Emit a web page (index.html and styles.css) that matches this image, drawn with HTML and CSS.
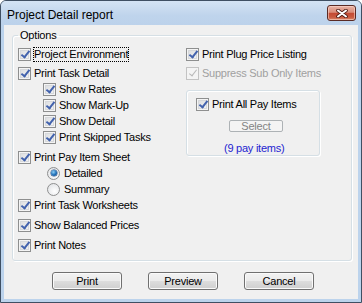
FILE: index.html
```html
<!DOCTYPE html>
<html>
<head>
<meta charset="utf-8">
<link rel="stylesheet" href="styles.css">
</head>
<body>
<div class="window">
  <div class="titlebar">
    <span class="title">Project Detail report</span>
    <span class="close">
      <svg width="12" height="9" viewBox="0 0 12 9">
        <path d="M2 1.5 L10 7.5 M10 1.5 L2 7.5" stroke="#4a1810" stroke-width="3.6" stroke-linecap="round"/>
        <path d="M2 1.5 L10 7.5 M10 1.5 L2 7.5" stroke="#ffffff" stroke-width="2" stroke-linecap="round"/>
      </svg>
    </span>
  </div>
  <div class="client">
    <fieldset class="options">
      <legend>Options</legend>
      <div class="cols">
        <div class="col">
          <div class="grp first">
            <div class="row"><span class="cb on"></span><span class="txt focus">Project Environment</span></div>
          </div>
          <div class="grp">
            <div class="row"><span class="cb on"></span><span class="txt">Print Task Detail</span></div>
            <div class="row sub"><span class="cb on"></span><span class="txt">Show Rates</span></div>
            <div class="row sub"><span class="cb on"></span><span class="txt">Show Mark-Up</span></div>
            <div class="row sub"><span class="cb on"></span><span class="txt">Show Detail</span></div>
            <div class="row sub"><span class="cb on"></span><span class="txt">Print Skipped Tasks</span></div>
          </div>
          <div class="grp">
            <div class="row"><span class="cb on"></span><span class="txt">Print Pay Item Sheet</span></div>
            <div class="row rsub"><span class="rb on"></span><span class="txt">Detailed</span></div>
            <div class="row rsub"><span class="rb"></span><span class="txt">Summary</span></div>
            <div class="row"><span class="cb on"></span><span class="txt">Print Task Worksheets</span></div>
          </div>
          <div class="grp">
            <div class="row"><span class="cb on"></span><span class="txt">Show Balanced Prices</span></div>
          </div>
          <div class="grp">
            <div class="row"><span class="cb on"></span><span class="txt">Print Notes</span></div>
          </div>
        </div>
        <div class="col">
          <div class="grp first">
            <div class="row"><span class="cb on"></span><span class="txt">Print Plug Price Listing</span></div>
          </div>
          <div class="grp">
            <div class="row disabled"><span class="cb on dis"></span><span class="txt">Suppress Sub Only Items</span></div>
          </div>
          <div class="paybox">
            <div class="row"><span class="cb on"></span><span class="txt">Print All Pay Items</span></div>
            <div class="selectbtn">Select</div>
            <div class="count">(9 pay items)</div>
          </div>
        </div>
      </div>
    </fieldset>
    <div class="buttons">
      <div class="btn">Print</div>
      <div class="btn">Preview</div>
      <div class="btn">Cancel</div>
    </div>
  </div>
</div>
</body>
</html>
```

FILE: styles.css
```css
html, body {
  margin: 0;
  padding: 0;
  background: #ffffff;
}

.window {
  width: 362px;
  height: 303px;
  box-sizing: border-box;
  border: 1px solid #3f4f63;
  border-radius: 6px 6px 0 0;
  background: #bcd3ec;
  display: flex;
  flex-direction: column;
  font-family: "Liberation Sans", Arial, sans-serif;
  color: #000;
}

.titlebar {
  height: 24px;
  flex: none;
  display: flex;
  align-items: flex-start;
  justify-content: space-between;
  padding: 0 5px 0 6px;
  background: linear-gradient(#d4e3f4, #bfd4ec 60%, #bcd2eb);
  border-radius: 5px 5px 0 0;
}

.title {
  font-size: 12px;
  line-height: 14px;
  margin-top: 7px;
  color: #000;
}

.close {
  width: 29px;
  height: 16px;
  margin-top: 4px;
  box-sizing: border-box;
  border: 1px solid #5a2a24;
  border-radius: 3px;
  background: linear-gradient(#e9b3a6 0%, #d98c78 45%, #c44a33 52%, #c95a3f 80%, #d98a6c 100%);
  box-shadow: inset 0 0 0 1px rgba(255, 220, 210, 0.55);
  display: flex;
  align-items: center;
  justify-content: center;
}

.close svg {
  display: block;
}

.client {
  flex: 1;
  margin: 0 3px 3px 3px;
  background: #f0f0f0;
  padding: 4px 6px 0 8px;
  display: flex;
  flex-direction: column;
}

.options {
  margin: 0;
  padding: 5px 5px 7px 5px;
  border: 1px solid #d5dfe5;
  border-radius: 3px;
  box-shadow: inset 1px 1px 0 #ffffff, 1px 1px 0 #ffffff;
  min-width: 0;
}

.options legend {
  padding: 0 2px;
  font-size: 11px;
  line-height: 12px;
  letter-spacing: -0.2px;
}

.cols {
  display: grid;
  grid-template-columns: 168px 1fr;
}

.col {
  display: flex;
  flex-direction: column;
}

.grp {
  display: flex;
  flex-direction: column;
  margin-top: 4px;
}

.grp.first {
  margin-top: 0;
}

.col .grp.first + .grp {
  margin-top: 3px;
}

.row {
  height: 16px;
  display: flex;
  align-items: center;
  font-size: 11px;
  letter-spacing: -0.25px;
  white-space: nowrap;
}

.row.sub {
  padding-left: 25px;
}

.row.rsub {
  padding-left: 29px;
}

.txt {
  margin-left: 2px;
  border: 1px dotted transparent;
  line-height: 13px;
}

.rsub .txt {
  margin-left: 3px;
}

.txt.focus {
  border-color: #000;
}

.cb {
  flex: none;
  width: 13px;
  height: 13px;
  box-sizing: border-box;
  border: 1px solid #8e8f8f;
  background: linear-gradient(135deg, #d8dadd, #f6f6f6);
  box-shadow: inset 0 0 0 1px #f4f4f4, inset 0 0 0 2px #d6d8db;
  position: relative;
}

.cb.on::after {
  content: "";
  position: absolute;
  left: 3.5px;
  top: 0.5px;
  width: 3px;
  height: 7px;
  border: solid #4262ad;
  border-width: 0 2px 2px 0;
  transform: rotate(38deg);
}

.cb.dis {
  border-color: #c3c3c3;
  background: #f4f4f4;
  box-shadow: none;
}

.cb.dis::after {
  border-color: #b8b8b8;
  border-width: 0 1.5px 1.5px 0;
}

.row.disabled {
  color: #a0a0a0;
}

.rb {
  flex: none;
  width: 13px;
  height: 13px;
  box-sizing: border-box;
  border-radius: 50%;
  border: 1px solid #8e8f8f;
  background: radial-gradient(circle at 60% 65%, #ffffff, #dcdee1);
  position: relative;
}

.rb.on::after {
  content: "";
  position: absolute;
  left: 2.5px;
  top: 2.5px;
  width: 6px;
  height: 6px;
  border-radius: 50%;
  background: radial-gradient(circle at 40% 35%, #8fd0f5, #1d6cb5 55%, #124a8a);
  box-shadow: 0 0 0 0.5px #2a4b7c;
}

.paybox {
  margin-top: 9px;
  width: 134px;
  height: 66px;
  box-sizing: border-box;
  border: 1px solid #d5dfe5;
  border-radius: 3px;
  box-shadow: inset 1px 1px 0 #ffffff, 1px 1px 0 #ffffff;
  padding: 5px 0 0 9px;
  display: flex;
  flex-direction: column;
  align-items: flex-start;
}

.selectbtn {
  margin: 8px 0 0 33px;
  width: 54px;
  height: 12px;
  box-sizing: border-box;
  border: 1px solid #adb2b5;
  border-radius: 2px;
  background: #f4f4f4;
  color: #838383;
  font-size: 11px;
  line-height: 10px;
  text-align: center;
  letter-spacing: -0.2px;
}

.count {
  margin: 10px 0 0 28px;
  font-size: 11px;
  line-height: 12px;
  color: #2424d0;
  letter-spacing: -0.25px;
}

.buttons {
  display: flex;
  justify-content: flex-start;
  gap: 26px;
  padding-left: 40px;
  margin-top: 11px;
}

.btn {
  width: 70px;
  height: 18px;
  box-sizing: border-box;
  border: 1px solid #707070;
  border-radius: 3px;
  background: linear-gradient(#f2f2f2 0%, #ebebeb 48%, #dddddd 52%, #cfcfcf 100%);
  box-shadow: inset 0 0 0 1px #fafafa;
  font-size: 11px;
  line-height: 16px;
  text-align: center;
  letter-spacing: -0.2px;
}
```
